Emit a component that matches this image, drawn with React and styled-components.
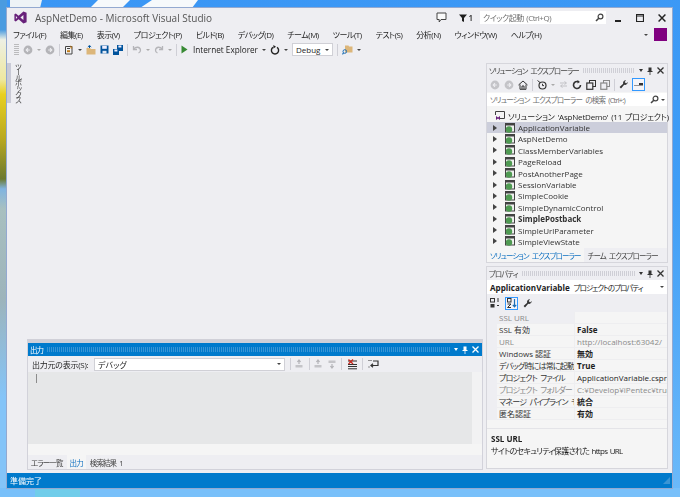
import React from 'react'
import styled, { createGlobalStyle } from 'styled-components'

const Global = createGlobalStyle`
  html, body { margin: 0; padding: 0; width: 680px; height: 497px; overflow: hidden; }
  body {
    font-family: "Open Sans", "Noto Sans CJK JP", sans-serif;
    font-size: 8px;
    font-feature-settings: "palt";
    color: #1e1e1e;
    background: linear-gradient(170deg, #3a96f5 0%, #3f9df6 50%, #6cbafa 100%);
  }
`

const Wallpaper = styled.svg`
  position: absolute;
  left: 0;
  top: 0;
  width: 680px;
  height: 497px;
`

const Desktop = styled.div`
  position: relative;
  padding: 8px 8px 9px 7px;
  height: 497px;
  box-sizing: border-box;
  filter: blur(0.3px);
`

const Win = styled.div`
  position: relative;
  height: 480px;
  background: #eeeef2;
  box-shadow: 0 0 0 1px #93a9d0;
  display: flex;
  flex-direction: column;
`

const TitleRow = styled.div`
  height: 19px;
  display: flex;
  align-items: center;
  padding: 0 5px 0 7px;
  flex: none;
`

const Title = styled.span`
  margin-left: 8px;
  font-size: 10px;
  color: #555;
  flex: 1;
`

const QuickBox = styled.div`
  width: 126px;
  height: 13px;
  background: #fff;
  color: #717171;
  letter-spacing: -0.5px;
  word-spacing: 1px;
  display: flex;
  align-items: center;
  justify-content: space-between;
  padding: 0 2px 0 3px;
  box-sizing: border-box;
  margin: 0 8px 0 7px;
`

const Notice = styled.span`
  font-weight: 600;
  display: flex;
  align-items: center;
  gap: 1px;
  margin-left: 12px;
`

const ChromeBtns = styled.div`
  display: flex;
  gap: 14px;
  align-items: center;
  margin-right: 1px;
`

const MenuRow = styled.div`
  height: 15px;
  display: flex;
  align-items: center;
  padding-left: 6px;
  flex: none;
`

const MenuItem = styled.span`
  color: #1e1e1e;
  white-space: nowrap;
  letter-spacing: -0.5px;
  margin-right: 14px;
`

const Account = styled.div`
  margin-left: auto;
  display: flex;
  align-items: center;
  gap: 6px;
  margin-right: 5px;
`

const Swatch = styled.div`
  width: 13px;
  height: 13px;
  background: #800080;
`

const Toolbar = styled.div`
  height: ${p => p.$h || 15}px;
  display: flex;
  align-items: center;
  flex: none;
  padding-left: ${p => p.$pad ?? 7}px;
  gap: ${p => p.$gap || 4}px;
  background: #eeeef2;
`

const Sep = styled.i`
  width: 1px;
  height: 12px;
  background: #cfcfd6;
  flex: none;
`

const Caret = styled.i`
  width: 0;
  height: 0;
  border: 2px solid transparent;
  border-top: 2.5px solid ${p => p.$light ? '#aaa' : '#444'};
  border-bottom: 0;
  flex: none;
`

const PaneCaret = styled.i`
  width: 0;
  height: 0;
  border: 2.5px solid transparent;
  border-top: 3px solid ${p => p.$color};
  border-bottom: 0;
  flex: none;
`

const Grip = styled.i`
  width: 5px;
  height: 11px;
  opacity: .6;
  background: repeating-linear-gradient(0deg, #999 0 1px, transparent 1px 2px);
  flex: none;
`

const RunLabel = styled.span`
  font-size: 8.2px;
  color: #1e1e1e;
  margin-left: 1px;
`

const Combo = styled.div`
  width: ${p => p.$w}px;
  height: 13px;
  background: #fff;
  border: 1px solid #d0d0d6;
  box-sizing: border-box;
  display: flex;
  align-items: center;
  justify-content: space-between;
  padding: 0 3px;
  color: #1e1e1e;
  flex: none;
`

const Body = styled.div`
  flex: 1;
  display: flex;
  min-height: 0;
`

const ToolboxRail = styled.div`
  width: 20px;
  flex: none;
  display: flex;
  padding-top: 6px;
  box-sizing: border-box;
`

const RailTab = styled.div`
  width: 4px;
  height: 40px;
  background: #c9cad6;
`

const RailText = styled.div`
  writing-mode: vertical-rl;
  font-size: 7.5px;
  letter-spacing: -1.9px;
  color: #444;
  margin-left: 2px;
  height: 44px;
  white-space: nowrap;
`

const Center = styled.div`
  width: 456px;
  flex: none;
  display: flex;
  flex-direction: column;
  justify-content: flex-end;
  padding-bottom: 3px;
`

const OutputPane = styled.div`
  height: 131px;
  display: flex;
  flex-direction: column;
  border: 1px solid #d2d2da;
  border-top: 4px solid #d0d0d8;
  background: #eeeef2;
  box-sizing: border-box;
`

const PaneTitle = styled.div`
  height: 13px;
  flex: none;
  display: flex;
  align-items: center;
  gap: 4px;
  padding: 0 3px 0 2px;
  white-space: nowrap;
  font-size: 7.5px;
  letter-spacing: -0.95px;
  word-spacing: 2px;
  color: ${p => p.$active ? '#fff' : '#444'};
  background: ${p => p.$active ? '#007acc' : '#eeeef2'};
`

const Dots = styled.i`
  flex: 1;
  height: 5px;
  background: repeating-linear-gradient(90deg, ${p => p.$active ? '#3a95d5' : '#cfcfd6'} 0 1px, transparent 1px 2px);
`

const OutBar = styled.div`
  height: 16px;
  flex: none;
  display: flex;
  align-items: center;
  padding-left: 4px;
  gap: 4.5px;
  white-space: nowrap;
  color: #1e1e1e;
`

const OutLabel = styled.span`
  width: 57.5px;
  flex: none;
  letter-spacing: -0.25px;
`

const OutArea = styled.div`
  flex: 1;
  display: flex;
  min-height: 0;
`

const OutText = styled.div`
  flex: 1;
  background: #e6e7e8;
  padding: 1px 6px;
  color: #555;
  font-size: 9px;
  line-height: 9px;
`

const ScrollV = styled.div`
  width: 10px;
  background: #f2f2f3;
`

const ScrollH = styled.div`
  height: 11px;
  flex: none;
  background: #f5f5f5;
`

const TabRow = styled.div`
  display: flex;
  height: 14px;
  flex: none;
  align-items: stretch;
  background: #eeeef2;
  gap: 1px;
`

const Tab = styled.div`
  padding: 0 3px;
  display: flex;
  align-items: center;
  white-space: nowrap;
  font-size: 7.5px;
  letter-spacing: -0.9px;
  word-spacing: 2px;
  color: ${p => p.$on ? '#0e70c0' : '#444'};
  background: ${p => p.$on ? '#f5f5f5' : 'transparent'};
`

const RightCol = styled.div`
  width: 182px;
  margin-left: 3px;
  flex: none;
  display: flex;
  flex-direction: column;
  gap: 3px;
  padding: 6px 0 3px;
  box-sizing: border-box;
`

const SidePane = styled.div`
  display: flex;
  flex-direction: column;
  border: 1px solid #d6d6dc;
  background: #f5f5f5;
  box-sizing: border-box;
  height: ${p => p.$h}px;
  flex: none;
`

const SearchBox = styled.div`
  height: 13px;
  margin: 1px 0;
  background: #fff;
  color: #717171;
  font-size: 7.5px;
  letter-spacing: -0.8px;
  word-spacing: 2px;
  display: flex;
  align-items: center;
  justify-content: space-between;
  white-space: nowrap;
  padding: 0 2px 0 3px;
  flex: none;
`

const SearchIcons = styled.span`
  display: flex;
  align-items: center;
  gap: 2px;
`

const Tree = styled.div`
  flex: 1;
  padding-top: 3.5px;
`

const Row = styled.div`
  height: 11.4px;
  display: flex;
  align-items: center;
  white-space: nowrap;
  color: ${p => p.$root ? '#1e1e1e' : '#333'};
  font-weight: ${p => p.$bold ? 700 : 400};
  letter-spacing: ${p => p.$root ? '-0.2px' : '0'};
  word-spacing: ${p => p.$root ? '1px' : '0'};
  background: ${p => p.$sel ? '#ccceDB' : 'transparent'};
  padding-left: ${p => p.$root ? 8 : 6}px;
  gap: ${p => p.$root ? 3 : 0}px;
`

const Arrow = styled.i`
  width: 0;
  height: 0;
  border-left: 4px solid #444;
  border-top: 3px solid transparent;
  border-bottom: 3px solid transparent;
  margin-right: 8px;
  flex: none;
`

const ObjectBar = styled.div`
  height: 14px;
  flex: none;
  background: #fff;
  display: flex;
  align-items: center;
  padding: 0 3px;
  gap: 4px;
  white-space: nowrap;
`

const ObjName = styled.b`
  font-weight: 700;
  font-size: 8.1px;
`

const ObjKind = styled.span`
  font-size: 7.5px;
  letter-spacing: -1px;
`

const PropGrid = styled.div`
  display: grid;
  grid-template-columns: 10px 77px 1fr;
  grid-auto-rows: 12px;
  background: #f5f5f5;
  flex: none;
  overflow: hidden;
`

const Gutter = styled.div`
  background: #eeeef2;
`

const PropName = styled.div`
  line-height: 12px;
  white-space: nowrap;
  overflow: hidden;
  letter-spacing: ${p => p.$tight ? '-0.8px' : '0'};
  word-spacing: ${p => p.$tight ? '2px' : '0'};
  color: ${p => p.$dim ? '#8a8a8a' : '#333'};
  background: ${p => p.$head ? '#eeeef2' : 'transparent'};
  padding-left: 2px;
  border-bottom: 1px solid #eeeef0;
  box-sizing: border-box;
`

const PropValue = styled.div`
  line-height: 12px;
  white-space: nowrap;
  overflow: hidden;
  color: ${p => p.$dim ? '#8a8a8a' : '#1e1e1e'};
  font-weight: ${p => p.$bold ? 700 : 400};
  padding-left: 2px;
  border-left: 1px solid #eeeef0;
  border-bottom: 1px solid #eeeef0;
  box-sizing: border-box;
`

const Desc = styled.div`
  margin-top: 8px;
  padding: 4px;
  border-top: 1px solid #e4e4e8;
  line-height: 12px;
  flex: 1;
`

const DescHead = styled.div`
  font-weight: 700;
`

const DescText = styled.div`
  letter-spacing: -0.7px;
  word-spacing: 1px;
  white-space: nowrap;
`

const Status = styled.div`
  height: 15px;
  flex: none;
  background: #007acc;
  color: #fff;
  padding: 0 2px 0 3px;
  display: flex;
  align-items: center;
  justify-content: space-between;
`

const ActiveBtn = styled.span`
  width: 13px;
  height: 13px;
  border: 1px solid #3399ff;
  background: #f4f4f8;
  box-sizing: border-box;
  display: flex;
  align-items: center;
  justify-content: center;
  flex: none;
`

const SizeGrip = () => (
  <svg width="7" height="7" viewBox="0 0 7 7">
    <path d="M7 0 V7 H0 Z" fill="#3a95d5" />
  </svg>
)

const WallpaperArt = () => (
  <Wallpaper viewBox="0 0 680 497">
    <defs>
      <linearGradient id="edge" x1="0" y1="0" x2="0" y2="1">
        <stop offset="0" stopColor="#4a9be0" />
        <stop offset="0.06" stopColor="#4a9be0" />
        <stop offset="0.08" stopColor="#eef0e4" />
        <stop offset="0.16" stopColor="#eee8a0" />
        <stop offset="0.19" stopColor="#e8d020" />
        <stop offset="0.28" stopColor="#b8a820" />
        <stop offset="0.36" stopColor="#6c7a30" />
        <stop offset="0.38" stopColor="#80b4e0" />
        <stop offset="0.42" stopColor="#a8c0c0" />
        <stop offset="0.6" stopColor="#9db4bb" />
        <stop offset="0.8" stopColor="#84c4f8" />
        <stop offset="1" stopColor="#84c4f8" />
      </linearGradient>
    </defs>
    <rect x="0" y="0" width="7" height="497" fill="url(#edge)" />
    <path d="M10 0 H42 L40 8 H10 Z" fill="#eef3f6" />
    <path d="M98 0 H130 L122 8 H90 Z" fill="#f6f9fb" />
    <path d="M152 0 H198 L192 8 H140 Z" fill="#f6f9fb" />
    <rect x="0" y="488" width="680" height="9" fill="#78c0fa" />
    <rect x="35" y="489" width="45" height="8" fill="#70cdea" />
  </Wallpaper>
)

const VsLogo = () => (
  <svg width="13" height="13" viewBox="0 0 13 13">
    <path d="M9.4 0.5 L12.6 1.8 V11.2 L9.4 12.5 L4.6 8.2 L1.8 10.4 L0.4 9.7 V3.3 L1.8 2.6 L4.6 4.8 Z M9.4 3.9 L6.4 6.5 L9.4 9.1 Z M1.9 4.9 V8.1 L3.4 6.5 Z" fill="#68217a" fillRule="evenodd" />
  </svg>
)

const Search = ({ color = '#444' }) => (
  <svg width="9" height="9" viewBox="0 0 9 9">
    <circle cx="5.5" cy="3.5" r="2.4" fill="none" stroke={color} strokeWidth="1.2" />
    <path d="M3.8 5.2 L1 8" stroke={color} strokeWidth="1.6" />
  </svg>
)

const Close = ({ color = '#333', size = 7 }) => (
  <svg width={size} height={size} viewBox="0 0 7 7">
    <path d="M0.5 0.5 L6.5 6.5 M6.5 0.5 L0.5 6.5" stroke={color} strokeWidth="1.3" />
  </svg>
)

const Pin = ({ color = '#333' }) => (
  <svg width="6" height="8" viewBox="0 0 6 8">
    <path d="M1.5 0.5 H4.5 V4 H5.5 V5 H3.4 V8 H2.6 V5 H0.5 V4 H1.5 Z" fill={color} />
  </svg>
)

const PaneControls = ({ color = '#333' }) => (
  <>
    <PaneCaret $color={color} />
    <Pin color={color} />
    <Close color={color} />
  </>
)

const RoundArrow = ({ dir, color = '#b4b4b8' }) => (
  <svg width="10" height="10" viewBox="0 0 10 10">
    <circle cx="5" cy="5" r="4.4" fill={color} />
    <path d={dir === 'l' ? 'M6.8 5 H3.4 M5 3.2 L3.2 5 L5 6.8' : 'M3.2 5 H6.6 M5 3.2 L6.8 5 L5 6.8'} stroke="#eeeef2" strokeWidth="1.1" fill="none" />
  </svg>
)

const Undo = ({ flip }) => (
  <svg width="10" height="9" viewBox="0 0 10 9" style={flip ? { transform: 'scaleX(-1)' } : undefined}>
    <path d="M1.5 1 V4.5 H5 M2 4 C3.5 1.5 8 1.5 8.5 5 C8.6 6.5 7.6 7.6 6.5 8" fill="none" stroke="#b5b5b9" strokeWidth="1.3" />
  </svg>
)

const Save = ({ color = '#00539c' }) => (
  <svg width="9" height="9" viewBox="0 0 9 9">
    <path d="M0.5 0.5 H8.5 V8.5 H0.5 Z" fill={color} />
    <rect x="2.2" y="0.8" width="4.6" height="3" fill="#eef" />
    <rect x="2.5" y="5.8" width="4" height="2.7" fill="#dfe6f2" />
  </svg>
)

const SaveAll = () => (
  <svg width="10" height="10" viewBox="0 0 10 10">
    <rect x="4" y="0" width="6" height="6" fill="#00539c" />
    <rect x="5.4" y="0.5" width="3" height="2" fill="#eef" />
    <rect x="0" y="4" width="6" height="6" fill="#00539c" />
    <rect x="1.4" y="4.5" width="3" height="2" fill="#eef" />
  </svg>
)

const NewProject = () => (
  <svg width="10" height="10" viewBox="0 0 10 10">
    <path d="M1.5 1.5 H8 V9 H1.5 Z" fill="#f4f4f6" stroke="#444" strokeWidth="1" />
    <rect x="3" y="3" width="3" height="1" fill="#444" />
    <rect x="3" y="5.2" width="3" height="2" fill="#c27d1a" />
    <path d="M6.5 0 L7.2 1.4 L8.8 1.6 L7.6 2.6 L8 4 L6.5 3.3 Z" fill="#c27d1a" />
  </svg>
)

const Folder = () => (
  <svg width="10" height="10" viewBox="0 0 10 10">
    <path d="M0.5 3 H4 L5 4 H9.5 V9.5 H0.5 Z" fill="#dcb67a" />
    <path d="M3.5 3 V0.8 M1.8 2 L3.5 0.4 L5.2 2" stroke="#00539c" strokeWidth="1" fill="none" />
  </svg>
)

const Play = () => (
  <svg width="7" height="9" viewBox="0 0 7 9"><path d="M0.5 0.5 L6.5 4.5 L0.5 8.5 Z" fill="#388a34" /></svg>
)

const Refresh = () => (
  <svg width="10" height="10" viewBox="0 0 10 10">
    <path d="M3 2.4 A3.6 3.6 0 1 0 7 2.4" fill="none" stroke="#222" strokeWidth="1.4" />
    <path d="M3.4 0 L6 1.8 L3.4 3.6 Z" fill="#222" />
  </svg>
)

const FindFiles = () => (
  <svg width="11" height="10" viewBox="0 0 11 10">
    <path d="M3 0.5 H6.5 L7 1.5 H10.5 V7.5 H3 Z" fill="#dcb67a" />
    <circle cx="2.8" cy="6.5" r="1.8" fill="none" stroke="#1f6fb5" strokeWidth="1" />
    <path d="M1.6 7.8 L0.4 9.4" stroke="#1f6fb5" strokeWidth="1.1" />
  </svg>
)

const SpeechBubble = () => (
  <svg width="11" height="11" viewBox="0 0 11 11">
    <path d="M1 1 H10 V7.5 H5 L3.2 10 V7.5 H1 Z" fill="#fafafa" stroke="#444" strokeWidth="1" />
  </svg>
)

const Funnel = () => (
  <svg width="8" height="8" viewBox="0 0 8 8"><path d="M0 0.5 H8 L5 4 V8 L3 7 V4 Z" fill="#1e1e1e" /></svg>
)

const WinBtn = ({ kind }) => {
  if (kind === 'min') return <svg width="8" height="8" viewBox="0 0 8 8"><rect x="1" y="6" width="6" height="2" fill="#222" /></svg>
  if (kind === 'max') return <svg width="8" height="8" viewBox="0 0 8 8"><path d="M0.5 0.5 H7.5 V7.5 H0.5 Z M0.5 2 H7.5" fill="none" stroke="#222" strokeWidth="1.2" /></svg>
  return <Close color="#222" size={8} />
}

const Home = () => (
  <svg width="10" height="10" viewBox="0 0 10 10">
    <path d="M0.5 5 L5 1 L9.5 5 M2 4.5 V9.3 H8 V4.5 M4 9 V6 H6 V9" fill="none" stroke="#333" strokeWidth="1" />
  </svg>
)

const History = () => (
  <svg width="10" height="10" viewBox="0 0 10 10">
    <circle cx="5.5" cy="5.5" r="3.5" fill="none" stroke="#333" strokeWidth="1.2" />
    <path d="M5.5 3.8 V5.6 H7 M0.5 0.5 L3 2.5" stroke="#333" strokeWidth="1" fill="none" />
  </svg>
)

const SyncGray = () => (
  <svg width="9" height="9" viewBox="0 0 9 9">
    <path d="M1 3 H7 M5.5 1.5 L7.5 3 L5.5 4.5 M8 6 H2 M3.5 4.5 L1.5 6 L3.5 7.5" fill="none" stroke="#c2c2c6" strokeWidth="1" />
  </svg>
)

const RefreshAll = () => (
  <svg width="10" height="10" viewBox="0 0 10 10">
    <path d="M8.5 5 A3.5 3.5 0 1 1 6.5 1.8 M1.5 5 A3.5 3.5 0 0 0 3.5 8.2" fill="none" stroke="#333" strokeWidth="1.6" />
    <path d="M5.5 0 L8 2 L5.5 3.5 Z" fill="#333" />
  </svg>
)

const Copies = ({ dim }) => (
  <svg width="10" height="10" viewBox="0 0 10 10">
    <rect x="3.5" y="0.5" width="6" height="6" fill="none" stroke={dim ? '#888' : '#333'} />
    <rect x="0.8" y="3" width="6" height="6.3" fill="#eeeef2" stroke={dim ? '#888' : '#333'} strokeWidth="1.2" />
  </svg>
)

const Wrench = () => (
  <svg width="9" height="9" viewBox="0 0 9 9">
    <path d="M8.6 2 A2.6 2.6 0 0 1 5.2 4.8 L2 8.4 L0.6 7 L4.2 3.8 A2.6 2.6 0 0 1 7 0.4 L5.6 1.9 L7.1 3.4 Z" fill="#333" />
  </svg>
)

const Dash = () => (
  <svg width="9" height="5" viewBox="0 0 9 5"><path d="M0 3 H5 V1 H9 V3.6 H0 Z" fill="#333" /></svg>
)

const ProjectIcon = () => (
  <svg width="10" height="10" viewBox="0 0 10 10" style={{ marginRight: 3, flex: 'none' }}>
    <rect x="0.5" y="0.5" width="9" height="8.5" fill="#f0f0f0" stroke="#424242" />
    <rect x="0.5" y="0.5" width="9" height="2" fill="#424242" />
    <circle cx="4" cy="6.5" r="3.2" fill="#4f9a52" />
  </svg>
)

const SolutionIcon = () => (
  <svg width="10" height="10" viewBox="0 0 10 10" style={{ flex: 'none' }}>
    <path d="M0.5 4 V0.5 H9.5 V7.5 H5" fill="none" stroke="#424242" />
    <path d="M1 5 L3 6.5 L5 5 V9 L3 7.5 L1 9 Z" fill="#68217a" />
  </svg>
)

const SortCat = () => (
  <svg width="10" height="10" viewBox="0 0 10 10">
    <rect x="0.5" y="0.5" width="4" height="3.5" fill="none" stroke="#333" />
    <rect x="0.5" y="6" width="4" height="3.5" fill="#333" />
    <path d="M7 1 H9 M7 3 H9 M7 7.5 H9" stroke="#333" strokeWidth="1" />
  </svg>
)

const SortAz = () => (
  <svg width="10" height="10" viewBox="0 0 10 10">
    <rect x="0.5" y="0.5" width="3.5" height="3.5" fill="none" stroke="#333" />
    <path d="M0.5 6 H4 L0.5 9.5 H4" fill="none" stroke="#333" />
    <path d="M7.5 1 V8.5 M5.8 6.8 L7.5 8.8 L9.2 6.8" fill="none" stroke="#1f6fb5" strokeWidth="1.2" />
  </svg>
)

const GoMsg = ({ flip }) => (
  <svg width="9" height="10" viewBox="0 0 9 10" style={flip ? { transform: 'scaleY(-1)' } : undefined}>
    <path d="M0.5 8.5 H7.5 V6 H0.5 Z" fill="#c4c4c8" />
    <path d="M4 5 V1.5 M2.4 3 L4 1 L5.6 3" fill="none" stroke="#b4b4b8" strokeWidth="1.2" />
  </svg>
)

const ClearAll = () => (
  <svg width="11" height="11" viewBox="0 0 11 11">
    <path d="M1 2 H10 M1 5.5 H10 M1 7.5 H10 M1 9.8 H10" stroke="#333" strokeWidth="1" />
    <path d="M1.5 0.5 L6 5 M6 0.5 L1.5 5" stroke="#c8281e" strokeWidth="1.3" />
  </svg>
)

const WordWrap = () => (
  <svg width="11" height="10" viewBox="0 0 11 10">
    <path d="M0.5 1.5 H4 M0.5 8 H2.5" stroke="#333" strokeWidth="1.2" strokeDasharray="1 1" />
    <path d="M5 2 H10 V6.5 H3.5 M5 4.8 L3 6.5 L5 8.2" fill="none" stroke="#333" strokeWidth="1.2" />
  </svg>
)

const menus = ['ファイル(F)', '編集(E)', '表示(V)', 'プロジェクト(P)', 'ビルド(B)', 'デバッグ(D)', 'チーム(M)', 'ツール(T)', 'テスト(S)', '分析(N)', 'ウィンドウ(W)', 'ヘルプ(H)']

const projects = ['ApplicationVariable', 'AspNetDemo', 'ClassMemberVariables', 'PageReload', 'PostAnotherPage', 'SessionVariable', 'SimpleCookie', 'SimpleDynamicControl', 'SimplePostback', 'SimpleUrlParameter', 'SimpleViewState']

const props = [
  { name: 'SSL URL', value: '', dim: true, head: true },
  { name: 'SSL 有効', value: 'False', bold: true },
  { name: 'URL', value: 'http://localhost:63042/', dim: true },
  { name: 'Windows 認証', value: '無効', bold: true },
  { name: 'デバッグ時には常に起動する', value: 'True', bold: true, tight: true },
  { name: 'プロジェクト ファイル', value: 'ApplicationVariable.csproj', tight: true },
  { name: 'プロジェクト フォルダー', value: 'C:¥Develop¥iPentec¥trunk', dim: true, tight: true },
  { name: 'マネージ パイプライン モード', value: '統合', bold: true, tight: true },
  { name: '匿名認証', value: '有効', bold: true },
]

export default function App() {
  return (
    <Desktop>
      <Global />
      <WallpaperArt />
      <Win>
        <TitleRow>
          <VsLogo />
          <Title>AspNetDemo - Microsoft Visual Studio</Title>
          <SpeechBubble />
          <Notice><Funnel />1</Notice>
          <QuickBox>クイック起動 (Ctrl+Q)<Search /></QuickBox>
          <ChromeBtns>
            <WinBtn kind="min" />
            <WinBtn kind="max" />
            <WinBtn kind="close" />
          </ChromeBtns>
        </TitleRow>
        <MenuRow>
          {menus.map(m => <MenuItem key={m}>{m}</MenuItem>)}
          <Account><Caret /><Swatch /></Account>
        </MenuRow>
        <Toolbar>
          <Grip />
          <RoundArrow dir="l" />
          <Caret $light />
          <RoundArrow dir="r" />
          <Sep />
          <NewProject />
          <Caret />
          <Folder />
          <Save />
          <SaveAll />
          <Sep />
          <Undo />
          <Caret $light />
          <Undo flip />
          <Caret $light />
          <Sep />
          <Play />
          <RunLabel>Internet Explorer</RunLabel>
          <Caret />
          <Refresh />
          <Caret />
          <Combo $w={41}>Debug<Caret /></Combo>
          <Sep />
          <FindFiles />
          <Caret />
        </Toolbar>
        <Body>
          <ToolboxRail>
            <RailTab />
            <RailText>ツールボックス</RailText>
          </ToolboxRail>
          <Center>
            <OutputPane>
              <PaneTitle $active>
                出力<Dots $active />
                <PaneControls color="#fff" />
              </PaneTitle>
              <OutBar>
                <OutLabel>出力元の表示(S):</OutLabel>
                <Combo $w={191}>デバッグ<Caret /></Combo>
                <Sep />
                <GoMsg />
                <Sep />
                <GoMsg />
                <GoMsg flip />
                <Sep />
                <ClearAll />
                <Sep />
                <WordWrap />
              </OutBar>
              <OutArea>
                <OutText>|</OutText>
                <ScrollV />
              </OutArea>
              <ScrollH />
              <TabRow>
                <Tab>エラー一覧</Tab>
                <Tab $on>出力</Tab>
                <Tab>検索結果 1</Tab>
              </TabRow>
            </OutputPane>
          </Center>
          <RightCol>
            <SidePane $h={200}>
              <PaneTitle>ソリューション エクスプローラー<Dots /><PaneControls /></PaneTitle>
              <Toolbar $pad={3}>
                <RoundArrow dir="l" color="#c4c4c8" />
                <RoundArrow dir="r" color="#c4c4c8" />
                <Home />
                <Sep />
                <History />
                <Caret $light />
                <SyncGray />
                <RefreshAll />
                <Copies />
                <Copies dim />
                <Sep />
                <Wrench />
                <ActiveBtn><Dash /></ActiveBtn>
              </Toolbar>
              <SearchBox>
                ソリューション エクスプローラー の検索 (Ctrl+:)
                <SearchIcons><Search /><Caret /></SearchIcons>
              </SearchBox>
              <Tree>
                <Row $root><SolutionIcon />ソリューション 'AspNetDemo' (11 プロジェクト)</Row>
                {projects.map((p, i) => (
                  <Row key={p} $sel={i === 0} $bold={p === 'SimplePostback'}>
                    <Arrow />
                    <ProjectIcon />
                    {p}
                  </Row>
                ))}
              </Tree>
              <TabRow>
                <Tab $on>ソリューション エクスプローラー</Tab>
                <Tab>チーム エクスプローラー</Tab>
              </TabRow>
            </SidePane>
            <SidePane $h={203}>
              <PaneTitle>プロパティ<Dots /><PaneControls /></PaneTitle>
              <ObjectBar>
                <ObjName>ApplicationVariable</ObjName>
                <ObjKind>プロジェクトのプロパティ</ObjKind>
                <Caret style={{ marginLeft: 'auto' }} />
              </ObjectBar>
              <Toolbar $h={18} $pad={3} $gap={5}>
                <SortCat />
                <ActiveBtn><SortAz /></ActiveBtn>
                <Wrench />
              </Toolbar>
              <PropGrid>
                {props.map(p => (
                  <React.Fragment key={p.name}>
                    <Gutter />
                    <PropName $dim={p.dim} $head={p.head} $tight={p.tight}>{p.name}</PropName>
                    <PropValue $dim={p.dim} $bold={p.bold}>{p.value}</PropValue>
                  </React.Fragment>
                ))}
              </PropGrid>
              <Desc>
                <DescHead>SSL URL</DescHead>
                <DescText>サイトのセキュリティ保護された https URL</DescText>
              </Desc>
            </SidePane>
          </RightCol>
        </Body>
        <Status>準備完了<SizeGrip /></Status>
      </Win>
    </Desktop>
  )
}
